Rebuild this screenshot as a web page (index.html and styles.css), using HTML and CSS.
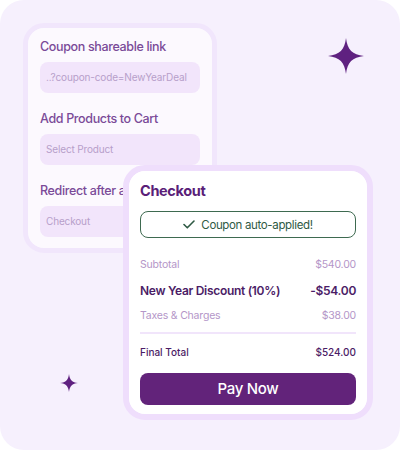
FILE: index.html
```html
<!DOCTYPE html>
<html>
<head>
<meta charset="utf-8">
<link rel="stylesheet" href="styles.css">
</head>
<body>
<div class="stage">
  <div class="config-card">
    <div class="config-inner">
      <div class="label">Coupon shareable link</div>
      <div class="field">..?coupon-code=NewYearDeal</div>
      <div class="label spaced">Add Products to Cart</div>
      <div class="field">Select Product</div>
      <div class="label spaced">Redirect after applying</div>
      <div class="field">Checkout</div>
    </div>
  </div>

  <svg class="sparkle sparkle-big" viewBox="0 0 40 40"><path d="M20 0 C21.5 13 27 18.5 40 20 C27 21.5 21.5 27 20 40 C18.5 27 13 21.5 0 20 C13 18.5 18.5 13 20 0 Z"/></svg>
  <svg class="sparkle sparkle-small" viewBox="0 0 40 40"><path d="M20 0 C21.5 13 27 18.5 40 20 C27 21.5 21.5 27 20 40 C18.5 27 13 21.5 0 20 C13 18.5 18.5 13 20 0 Z"/></svg>

  <div class="checkout-card">
    <div class="checkout-inner">
      <div class="title">Checkout</div>
      <div class="banner">
        <svg class="check" viewBox="0 0 12 9"><path d="M1 4.5 L4.3 7.8 L11 1"/></svg>
        <span>Coupon auto-applied!</span>
      </div>
      <div class="row muted first"><span>Subtotal</span><span>$540.00</span></div>
      <div class="row strong"><span>New Year Discount (10%)</span><span>-$54.00</span></div>
      <div class="row muted"><span>Taxes &amp; Charges</span><span>$38.00</span></div>
      <div class="divider"></div>
      <div class="row total"><span>Final Total</span><span>$524.00</span></div>
      <div class="pay">Pay Now</div>
    </div>
  </div>
</div>
</body>
</html>
```
FILE: styles.css
```css
* { box-sizing: border-box; }
html, body { margin: 0; padding: 0; background: #ffffff; }
body { font-family: Inter, "Noto Sans", sans-serif; }

.stage {
  position: relative;
  width: 400px;
  height: 450px;
  background: #f6f0fd;
  border-radius: 24px;
  padding: 23px;
  overflow: hidden;
}

.config-card {
  width: 194px;
  border: 5px solid #f1e6fc;
  border-radius: 21px;
}
.config-inner {
  background: #fcf9fe;
  border-radius: 16px;
  padding: 10px 12px 11px 12px;
}
.label {
  font-size: 12.5px;
  font-weight: 500;
  line-height: 18px;
  color: #7a4a98;
  letter-spacing: -0.35px;
  white-space: nowrap;
}
.label.spaced { margin-top: 17px; }
.field {
  margin-top: 6px;
  height: 31px;
  background: #f2e5fb;
  border-radius: 8px;
  padding-left: 6px;
  font-size: 10px;
  line-height: 31px;
  color: #b79fca;
  letter-spacing: -0.15px;
  white-space: nowrap;
}

.sparkle { position: absolute; fill: #5f2180; }
.sparkle-big { left: 328px; top: 38px; width: 36px; height: 36px; }
.sparkle-small { left: 60px; top: 374px; width: 18px; height: 18px; }

.checkout-card {
  position: absolute;
  left: 123px;
  top: 165px;
  width: 250px;
  border: 6px solid #efdefc;
  border-radius: 22px;
}
.checkout-inner {
  background: #ffffff;
  border-radius: 16px;
  padding: 10px 11px 9px 11px;
}
.title {
  font-size: 14.5px;
  font-weight: 700;
  line-height: 20px;
  color: #5a1e78;
  letter-spacing: -0.35px;
}
.banner {
  margin-top: 10px;
  height: 27px;
  border: 1.5px solid #3e6a50;
  border-radius: 8px;
  display: flex;
  align-items: center;
  justify-content: center;
  gap: 6px;
  color: #2f5a44;
  font-size: 11.5px;
  letter-spacing: -0.35px;
}
.check { width: 12px; height: 9px; fill: none; stroke: #2f5a44; stroke-width: 1.6; stroke-linecap: round; stroke-linejoin: round; }

.row {
  display: flex;
  justify-content: space-between;
  align-items: center;
}
.row.muted {
  font-size: 10.5px;
  line-height: 16px;
  color: #b496c8;
  margin-top: 8px;
  letter-spacing: -0.2px;
}
.row.muted.first { margin-top: 19px; }
.row.strong {
  font-size: 12px;
  font-weight: 600;
  line-height: 18px;
  color: #4b1c66;
  margin-top: 9px;
  letter-spacing: -0.3px;
}
.divider {
  margin-top: 8px;
  height: 1.5px;
  background: #f1e5fb;
}
.row.total {
  margin-top: 10px;
  font-size: 10px;
  font-weight: 500;
  line-height: 16px;
  color: #4b1c66;
}
.pay {
  margin-top: 13px;
  height: 32px;
  border-radius: 8px;
  background: #62237a;
  color: #ffffff;
  font-size: 15px;
  font-weight: 500;
  line-height: 32px;
  text-align: center;
  letter-spacing: -0.3px;
}
```
